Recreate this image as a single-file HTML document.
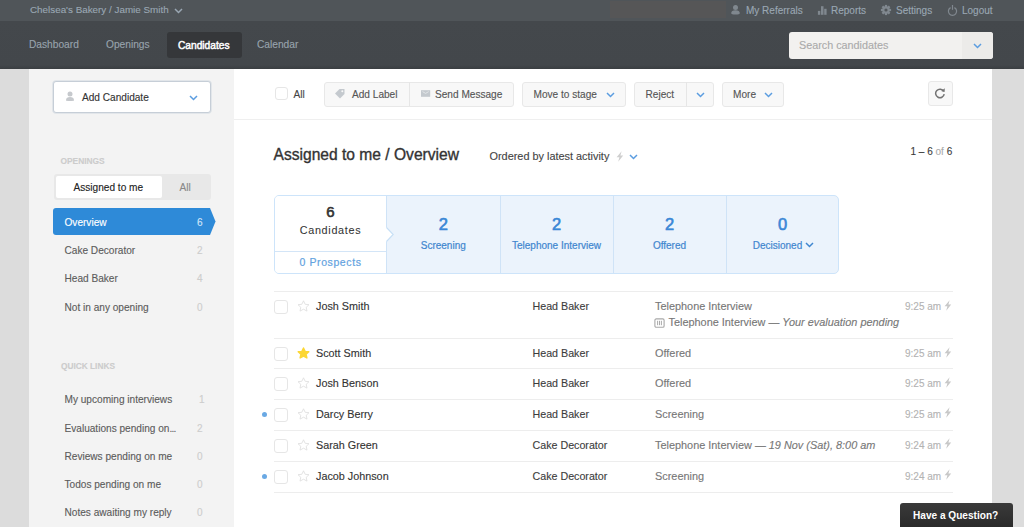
<!DOCTYPE html>
<html><head><meta charset="utf-8">
<style>
*{margin:0;padding:0;box-sizing:border-box}
html,body{width:1024px;height:527px;overflow:hidden;background:#dcdcdc;font-family:"Liberation Sans",sans-serif;}
.a{position:absolute;white-space:nowrap;-webkit-text-stroke-width:0.12px}
#top{position:absolute;left:0;top:0;width:1024px;height:21px;background:#505559}
#nav{position:absolute;left:0;top:21px;width:1024px;height:48px;background:linear-gradient(#44484c 0,#43474b 44px,#3a3e41 48px)}
#side{position:absolute;left:29px;top:69px;width:205px;height:458px;background:#f3f3f3}
#main{position:absolute;left:234px;top:69px;width:758px;height:458px;background:#fff}
.tl{color:#9aa7b3;font-size:10px;line-height:12px}
.nv{color:#98a3ad;font-size:10.2px;line-height:12px}
.btn{position:absolute;background:#f8f8f8;border:1px solid #e8e8e8;border-radius:3px;height:25px}
.bt{color:#555;font-size:10.1px;line-height:12px}
.chev{position:absolute;width:5px;height:5px;border-right:1.6px solid #5b9de0;border-bottom:1.6px solid #5b9de0;transform:rotate(45deg)}
.cb{position:absolute;width:14px;height:14px;border:1px solid #e6e6e6;border-radius:3px;background:#fff}
.nm{color:#333;font-size:10.8px;line-height:12px}
.jb{color:#3d3d3d;font-size:10.7px;line-height:12px}
.st{color:#777;font-size:10.9px;line-height:12px}
.tm{color:#b3b3b3;font-size:10px;line-height:12px}
.hl{position:absolute;left:274px;width:679px;height:1px;background:#ededed}
.si{color:#5c5c5c;font-size:10.1px;line-height:12px}
.sc{color:#cdcdcd;font-size:10px;line-height:12px}
</style></head><body>
<div id="top"></div>
<div class="a" style="left:610px;top:1px;width:116px;height:17px;background:#565657"></div>
<div class="a tl" style="left:30px;top:3.5px;font-size:9.86px">Chelsea's Bakery / Jamie Smith</div>
<svg class="a" style="left:173.5px;top:7.5px" width="10" height="6" viewBox="0 0 10 6"><path d="M1 1 L4.5 4.5 L8 1" fill="none" stroke="#9aa7b3" stroke-width="1.5"/></svg>

<svg class="a" style="left:730px;top:4px" width="12" height="12" viewBox="0 0 12 12"><circle cx="5.5" cy="3.4" r="2.5" fill="#80888f"/><path d="M1.2 9.2 Q1.2 6.2 5.5 6.2 Q9.8 6.2 9.8 9.2 Q9.8 10.6 5.5 10.6 Q1.2 10.6 1.2 9.2Z" fill="#80888f"/></svg>
<svg class="a" style="left:817px;top:5px" width="11" height="11" viewBox="0 0 11 11"><rect x="0.9" y="5.9" width="2.4" height="3.9" fill="#80888f"/><rect x="4" y="1.2" width="2.5" height="8.6" fill="#80888f"/><rect x="7.2" y="3.8" width="2.4" height="6" fill="#80888f"/></svg>
<svg class="a" style="left:880px;top:4px" width="12" height="12" viewBox="-6 -6 12 12"><g fill="#80888f"><circle r="3.7"/><rect x="-1.1" y="-5.1" width="2.2" height="10.2"/><rect x="-1.1" y="-5.1" width="2.2" height="10.2" transform="rotate(45)"/><rect x="-1.1" y="-5.1" width="2.2" height="10.2" transform="rotate(90)"/><rect x="-1.1" y="-5.1" width="2.2" height="10.2" transform="rotate(135)"/></g><circle r="1.6" fill="#505559"/></svg>
<svg class="a" style="left:947px;top:4px" width="12" height="12" viewBox="0 0 12 12"><path d="M3.6 3.6 A4.1 4.1 0 1 0 7.4 3.6" stroke="#80888f" stroke-width="1.2" fill="none"/><path d="M5.5 1 V5.8" stroke="#80888f" stroke-width="1.2"/></svg>

<div class="a tl" style="left:746px;top:4.7px">My Referrals</div>
<div class="a tl" style="left:831px;top:4.7px">Reports</div>
<div class="a tl" style="left:896px;top:4.7px">Settings</div>
<div class="a tl" style="left:962px;top:4.7px">Logout</div>

<div id="nav"></div>
<div class="a nv" style="left:29px;top:39px">Dashboard</div>
<div class="a nv" style="left:106px;top:39px">Openings</div>
<div class="a" style="left:166.5px;top:31.5px;width:75px;height:26.5px;background:#35373a;border-radius:3px"></div>
<div class="a" style="left:178px;top:39.5px;color:#fff;font-size:10.2px;line-height:12px;-webkit-text-stroke:0.45px #fff">Candidates</div>
<div class="a nv" style="left:257px;top:39px">Calendar</div>
<div class="a" style="left:789px;top:31.5px;width:204px;height:27px;background:#f2f1ef;border-radius:3px"></div>
<div class="a" style="left:962px;top:31.5px;width:31px;height:27px;background:#ecebe9;border-radius:0 3px 3px 0"></div>
<div class="a" style="left:799px;top:38.5px;color:#aaa;font-size:10.8px;line-height:12px">Search candidates</div>
<svg class="a" style="left:972.5px;top:43.0px" width="10" height="6" viewBox="0 0 10 6"><path d="M1 1 L4.5 4.5 L8 1" fill="none" stroke="#5b9de0" stroke-width="1.5"/></svg>

<div id="side"></div>
<!-- Add candidate -->
<div class="a" style="left:53px;top:81px;width:157.5px;height:31.5px;background:#fff;border:1px solid #c6ced7;box-shadow:0 0 0 0.8px #dde2e7;border-radius:3px"></div>
<svg class="a" style="left:65px;top:91px" width="10" height="11" viewBox="0 0 10 11"><circle cx="5" cy="3" r="2.5" fill="#c6c9cd"/><path d="M1 9.6 C1 6.8 2.6 6 5 6 C7.4 6 9 6.8 9 9.6 Q9 10 5 10 Q1 10 1 9.6Z" fill="#c6c9cd"/></svg>
<div class="a si" style="left:82px;top:91.7px;color:#333">Add Candidate</div>
<svg class="a" style="left:188.5px;top:94.5px" width="10" height="6" viewBox="0 0 10 6"><path d="M1 1 L4.5 4.5 L8 1" fill="none" stroke="#5b9de0" stroke-width="1.5"/></svg>

<div class="a" style="left:60.5px;top:157px;color:#ccc;font-weight:bold;font-size:8.4px;line-height:9px">OPENINGS</div>
<div class="a" style="left:53.5px;top:173.5px;width:157.5px;height:26.5px;background:#e8e8e8;border-radius:3px"></div>
<div class="a" style="left:55.5px;top:176px;width:106.5px;height:22px;background:#fff;border-radius:2px"></div>
<div class="a si" style="left:73.5px;top:182px;color:#222">Assigned to me</div>
<div class="a si" style="left:179.5px;top:182px;color:#888">All</div>

<svg class="a" style="left:52.5px;top:208px" width="163" height="27" viewBox="0 0 163 27"><path d="M0 3 Q0 0 3 0 L157 0 L162.5 13.5 L157 27 L3 27 Q0 27 0 24Z" fill="#2e8ad8"/></svg>
<div class="a si" style="left:64.5px;top:216.5px;color:#fff">Overview</div>
<div class="a si" style="left:197px;top:216.5px;color:#d3e6f8">6</div>

<div class="a si" style="left:64.5px;top:245px">Cake Decorator</div><div class="a sc" style="left:197px;top:245px">2</div>
<div class="a si" style="left:64.5px;top:273px">Head Baker</div><div class="a sc" style="left:197px;top:273px">4</div>
<div class="a si" style="left:64.5px;top:302px">Not in any opening</div><div class="a sc" style="left:197px;top:302px">0</div>

<div class="a" style="left:61px;top:362px;color:#ccc;font-weight:bold;font-size:8.3px;line-height:9px">QUICK LINKS</div>
<div class="a si" style="left:64.5px;top:394px">My upcoming interviews</div><div class="a sc" style="left:199px;top:394px">1</div>
<div class="a si" style="left:64.5px;top:422.5px">Evaluations pending on<span style="letter-spacing:-0.8px">...</span></div><div class="a sc" style="left:197px;top:422.5px">2</div>
<div class="a si" style="left:64.5px;top:451px">Reviews pending on me</div><div class="a sc" style="left:197px;top:451px">0</div>
<div class="a si" style="left:64.5px;top:478.8px">Todos pending on me</div><div class="a sc" style="left:197px;top:478.8px">0</div>
<div class="a si" style="left:64.5px;top:507.2px">Notes awaiting my reply</div><div class="a sc" style="left:197px;top:507.2px">0</div>
<div id="main"></div>
<!-- toolbar -->
<div class="a" style="left:234px;top:119px;width:758px;height:1px;background:#efefef"></div>
<div class="cb" style="left:274.5px;top:86.5px;width:13.5px;height:13px"></div>
<div class="a bt" style="left:293.5px;top:88.5px;color:#444">All</div>
<div class="btn" style="left:323.5px;top:81.5px;width:190px"></div>
<div class="a" style="left:409px;top:82px;width:1px;height:24px;background:#e6e6e6"></div>
<svg class="a" style="left:334px;top:88px" width="12" height="11" viewBox="0 0 12 11"><path d="M1 5.5 L5.5 1 L10.5 1 L10.5 6 L6 10.5Z" fill="#c4c9ce"/><circle cx="8.3" cy="3.2" r="1" fill="#f8f8f8"/></svg>
<div class="a bt" style="left:352px;top:88.5px">Add Label</div>
<svg class="a" style="left:421px;top:90px" width="10" height="8" viewBox="0 0 10 8"><rect x="0" y="0.2" width="9.2" height="6.6" fill="#c4c9ce"/><path d="M1.5 1.6 L4.6 3.4 L7.7 1.6" stroke="#eef0f2" stroke-width="0.7" fill="none"/></svg>
<div class="a bt" style="left:435px;top:88.5px">Send Message</div>

<div class="btn" style="left:522px;top:81.5px;width:104px"></div>
<div class="a bt" style="left:533.5px;top:88.5px">Move to stage</div>
<svg class="a" style="left:606.0px;top:92.0px" width="10" height="6" viewBox="0 0 10 6"><path d="M1 1 L4.5 4.5 L8 1" fill="none" stroke="#5b9de0" stroke-width="1.5"/></svg>

<div class="btn" style="left:634px;top:81.5px;width:80px"></div>
<div class="a" style="left:685.5px;top:82px;width:1px;height:24px;background:#e6e6e6"></div>
<div class="a bt" style="left:645.5px;top:88.5px">Reject</div>
<svg class="a" style="left:695.5px;top:92.0px" width="10" height="6" viewBox="0 0 10 6"><path d="M1 1 L4.5 4.5 L8 1" fill="none" stroke="#5b9de0" stroke-width="1.5"/></svg>

<div class="btn" style="left:721.5px;top:81.5px;width:62.5px"></div>
<div class="a bt" style="left:733px;top:88.5px">More</div>
<svg class="a" style="left:764.0px;top:92.0px" width="10" height="6" viewBox="0 0 10 6"><path d="M1 1 L4.5 4.5 L8 1" fill="none" stroke="#5b9de0" stroke-width="1.5"/></svg>

<div class="btn" style="left:928px;top:80.5px;width:25px;height:25px"></div>
<svg class="a" style="left:934px;top:86.5px" width="12" height="12" viewBox="0 0 12 12"><path d="M9.7 4.3 A4.3 4.3 0 1 0 10.2 7.2" stroke="#737373" stroke-width="1.5" fill="none"/><path d="M7.2 3.9 L10.6 4.9 L10.8 1.3Z" fill="#737373"/></svg>

<!-- title -->
<div class="a" style="left:273.5px;top:145.9px;color:#333;font-size:15.6px;line-height:17px;-webkit-text-stroke:0.35px #333">Assigned to me / Overview</div>
<div class="a" style="left:489.5px;top:150px;color:#444;font-size:10.9px;line-height:12px">Ordered by latest activity</div>
<svg class="a" style="left:615.5px;top:150.5px" width="8" height="11" viewBox="0 0 8 11"><path d="M5.6 0.3 L0.6 6.2 L3.4 6.2 L2.2 10.7 L7.2 4.6 L4.4 4.6Z" fill="#cfcfcf"/></svg>
<svg class="a" style="left:628.5px;top:154.0px" width="10" height="6" viewBox="0 0 10 6"><path d="M1 1 L4.5 4.5 L8 1" fill="none" stroke="#5b9de0" stroke-width="1.5"/></svg>
<div class="a" style="left:910.5px;top:146px;color:#3a3a3a;font-size:10px;line-height:12px;-webkit-text-stroke-width:0.1px">1 – 6 <span style="color:#aaa">of</span> 6</div>

<!-- stats -->
<div class="a" style="left:274px;top:195px;width:565px;height:78.5px;background:#ebf3fc;border:1px solid #cde4fa;border-radius:5px"></div>
<div class="a" style="left:275px;top:196px;width:111.5px;height:76.5px;background:#fff;border-radius:4px 0 0 4px"></div>
<div class="a" style="left:386px;top:196px;width:1px;height:76.5px;background:#cfe3f7"></div>
<svg class="a" style="left:385px;top:226.5px" width="10" height="15" viewBox="0 0 10 15"><path d="M0 0 L1.5 0.5 L8.2 7.5 L1.5 14.5 L0 15Z" fill="#fff"/><path d="M1.5 0.5 L8.2 7.5 L1.5 14.5" stroke="#c6dff6" stroke-width="1.1" fill="none"/></svg>
<div class="a" style="left:275px;top:251px;width:111px;height:1px;background:#d3e5f7"></div>
<div class="a" style="left:499.5px;top:196px;width:1px;height:76.5px;background:#cfe3f7"></div>
<div class="a" style="left:612.5px;top:196px;width:1px;height:76.5px;background:#cfe3f7"></div>
<div class="a" style="left:725.5px;top:196px;width:1px;height:76.5px;background:#cfe3f7"></div>

<div class="a" style="left:275px;top:202.5px;width:111px;text-align:center;color:#333;font-size:15px;line-height:17px;-webkit-text-stroke:0.6px #333">6</div>
<div class="a" style="left:275px;top:224px;width:111px;text-align:center;color:#333;font-size:10.8px;line-height:12px;letter-spacing:0.7px;-webkit-text-stroke:0.05px #333">Candidates</div>
<div class="a" style="left:275px;top:256px;width:111px;text-align:center;color:#62a2e0;font-size:10.5px;line-height:12px;letter-spacing:0.6px;-webkit-text-stroke:0.2px #62a2e0">0 Prospects</div>

<div class="a" style="left:387px;top:215px;width:112.5px;text-align:center;color:#3a87d6;font-size:16.5px;line-height:19px;-webkit-text-stroke:0.6px #3a87d6">2</div>
<div class="a" style="left:387px;top:239.7px;width:112.5px;text-align:center;color:#3f86cf;font-size:10px;line-height:12px;-webkit-text-stroke:0.2px #3f86cf">Screening</div>
<div class="a" style="left:500.5px;top:215px;width:112px;text-align:center;color:#3a87d6;font-size:16.5px;line-height:19px;-webkit-text-stroke:0.6px #3a87d6">2</div>
<div class="a" style="left:500.5px;top:239.7px;width:112px;text-align:center;color:#3f86cf;font-size:10px;line-height:12px;-webkit-text-stroke:0.2px #3f86cf">Telephone Interview</div>
<div class="a" style="left:613.5px;top:215px;width:112px;text-align:center;color:#3a87d6;font-size:16.5px;line-height:19px;-webkit-text-stroke:0.6px #3a87d6">2</div>
<div class="a" style="left:613.5px;top:239.7px;width:112px;text-align:center;color:#3f86cf;font-size:10px;line-height:12px;-webkit-text-stroke:0.2px #3f86cf">Offered</div>
<div class="a" style="left:726.5px;top:215px;width:112px;text-align:center;color:#3a87d6;font-size:16.5px;line-height:19px;-webkit-text-stroke:0.6px #3a87d6">0</div>
<div class="a" style="left:726.5px;top:239.7px;width:112px;text-align:center;color:#3f86cf;font-size:10px;line-height:12px;-webkit-text-stroke:0.2px #3f86cf;padding-right:10px">Decisioned</div>
<svg class="a" style="left:804.5px;top:242.0px" width="10" height="6" viewBox="0 0 10 6"><path d="M1 1 L4.5 4.5 L8 1" fill="none" stroke="#3f86cf" stroke-width="1.5"/></svg>

<!-- table -->
<div class="hl" style="top:291px"></div>
<div class="hl" style="top:338px"></div>
<div class="hl" style="top:368px"></div>
<div class="hl" style="top:399px"></div>
<div class="hl" style="top:430px"></div>
<div class="hl" style="top:461px"></div>
<div class="hl" style="top:492px"></div>
<div class="cb" style="left:274px;top:300px"></div>
<svg class="a" style="left:297px;top:300.2px" width="13" height="12" viewBox="0 0 13 12"><path d="M6.5 0.8 L8.2 4.3 L12 4.7 L9.2 7.3 L10 11.1 L6.5 9.2 L3 11.1 L3.8 7.3 L1 4.7 L4.8 4.3Z" fill="none" stroke="#e0e0e0" stroke-width="0.9" stroke-linejoin="round"/></svg>
<div class="a nm" style="left:316px;top:300.3px">Josh Smith</div>
<div class="a jb" style="left:532.5px;top:300.3px">Head Baker</div>
<div class="a st" style="left:655px;top:300.3px">Telephone Interview</div>
<div class="a tm" style="left:905px;top:301.3px">9:25 am</div>
<svg class="a" style="left:944px;top:300.0px" width="8" height="11" viewBox="0 0 8 11"><path d="M5.6 0.3 L0.6 6.2 L3.4 6.2 L2.2 10.7 L7.2 4.6 L4.4 4.6Z" fill="#c8c8c8"/></svg>
<div class="cb" style="left:274px;top:346.5px"></div>
<svg class="a" style="left:297px;top:346.7px" width="13" height="12" viewBox="0 0 13 12"><path d="M6.5 1 L8.1 4.4 L11.8 4.8 L9.1 7.3 L9.9 11 L6.5 9.1 L3.1 11 L3.9 7.3 L1.2 4.8 L4.9 4.4Z" fill="#fcd734" stroke="#fcd734" stroke-width="1.4" stroke-linejoin="round"/></svg>
<div class="a nm" style="left:316px;top:347.3px">Scott Smith</div>
<div class="a jb" style="left:532.5px;top:347.3px">Head Baker</div>
<div class="a st" style="left:655px;top:347.3px">Offered</div>
<div class="a tm" style="left:905px;top:348.3px">9:25 am</div>
<svg class="a" style="left:944px;top:346.5px" width="8" height="11" viewBox="0 0 8 11"><path d="M5.6 0.3 L0.6 6.2 L3.4 6.2 L2.2 10.7 L7.2 4.6 L4.4 4.6Z" fill="#c8c8c8"/></svg>
<div class="cb" style="left:274px;top:377px"></div>
<svg class="a" style="left:297px;top:377.2px" width="13" height="12" viewBox="0 0 13 12"><path d="M6.5 0.8 L8.2 4.3 L12 4.7 L9.2 7.3 L10 11.1 L6.5 9.2 L3 11.1 L3.8 7.3 L1 4.7 L4.8 4.3Z" fill="none" stroke="#e0e0e0" stroke-width="0.9" stroke-linejoin="round"/></svg>
<div class="a nm" style="left:316px;top:377.3px">Josh Benson</div>
<div class="a jb" style="left:532.5px;top:377.3px">Head Baker</div>
<div class="a st" style="left:655px;top:377.3px">Offered</div>
<div class="a tm" style="left:905px;top:378.3px">9:25 am</div>
<svg class="a" style="left:944px;top:376.5px" width="8" height="11" viewBox="0 0 8 11"><path d="M5.6 0.3 L0.6 6.2 L3.4 6.2 L2.2 10.7 L7.2 4.6 L4.4 4.6Z" fill="#c8c8c8"/></svg>
<div class="cb" style="left:274px;top:408px"></div>
<svg class="a" style="left:297px;top:408.2px" width="13" height="12" viewBox="0 0 13 12"><path d="M6.5 0.8 L8.2 4.3 L12 4.7 L9.2 7.3 L10 11.1 L6.5 9.2 L3 11.1 L3.8 7.3 L1 4.7 L4.8 4.3Z" fill="none" stroke="#e0e0e0" stroke-width="0.9" stroke-linejoin="round"/></svg>
<div class="a nm" style="left:316px;top:408.0px">Darcy Berry</div>
<div class="a jb" style="left:532.5px;top:408.0px">Head Baker</div>
<div class="a st" style="left:655px;top:408.0px">Screening</div>
<div class="a tm" style="left:905px;top:409.0px">9:25 am</div>
<svg class="a" style="left:944px;top:407.2px" width="8" height="11" viewBox="0 0 8 11"><path d="M5.6 0.3 L0.6 6.2 L3.4 6.2 L2.2 10.7 L7.2 4.6 L4.4 4.6Z" fill="#c8c8c8"/></svg>
<div class="a" style="left:262.2px;top:412.3px;width:5px;height:5px;border-radius:50%;background:#6aa9e4"></div>
<div class="cb" style="left:274px;top:439px"></div>
<svg class="a" style="left:297px;top:439.2px" width="13" height="12" viewBox="0 0 13 12"><path d="M6.5 0.8 L8.2 4.3 L12 4.7 L9.2 7.3 L10 11.1 L6.5 9.2 L3 11.1 L3.8 7.3 L1 4.7 L4.8 4.3Z" fill="none" stroke="#e0e0e0" stroke-width="0.9" stroke-linejoin="round"/></svg>
<div class="a nm" style="left:316px;top:438.7px">Sarah Green</div>
<div class="a jb" style="left:532.5px;top:438.7px">Cake Decorator</div>
<div class="a st" style="left:655px;top:438.7px">Telephone Interview — <i>19 Nov (Sat), 8:00 am</i></div>
<div class="a tm" style="left:905px;top:439.7px">9:24 am</div>
<svg class="a" style="left:944px;top:437.9px" width="8" height="11" viewBox="0 0 8 11"><path d="M5.6 0.3 L0.6 6.2 L3.4 6.2 L2.2 10.7 L7.2 4.6 L4.4 4.6Z" fill="#c8c8c8"/></svg>
<div class="cb" style="left:274px;top:470px"></div>
<svg class="a" style="left:297px;top:470.2px" width="13" height="12" viewBox="0 0 13 12"><path d="M6.5 0.8 L8.2 4.3 L12 4.7 L9.2 7.3 L10 11.1 L6.5 9.2 L3 11.1 L3.8 7.3 L1 4.7 L4.8 4.3Z" fill="none" stroke="#e0e0e0" stroke-width="0.9" stroke-linejoin="round"/></svg>
<div class="a nm" style="left:316px;top:469.5px">Jacob Johnson</div>
<div class="a jb" style="left:532.5px;top:469.5px">Cake Decorator</div>
<div class="a st" style="left:655px;top:469.5px">Screening</div>
<div class="a tm" style="left:905px;top:470.5px">9:24 am</div>
<svg class="a" style="left:944px;top:468.7px" width="8" height="11" viewBox="0 0 8 11"><path d="M5.6 0.3 L0.6 6.2 L3.4 6.2 L2.2 10.7 L7.2 4.6 L4.4 4.6Z" fill="#c8c8c8"/></svg>
<div class="a" style="left:262.2px;top:474.3px;width:5px;height:5px;border-radius:50%;background:#6aa9e4"></div>
<svg class="a" style="left:654px;top:317.5px" width="11" height="10" viewBox="0 0 11 10"><rect x="0.9" y="0.9" width="9.2" height="8.4" rx="1.3" fill="none" stroke="#a8a8a8" stroke-width="1.1"/><path d="M3.6 2.8 V7.2 M5.5 2.8 V7.2 M7.4 2.8 V7.2" stroke="#a0a0a0" stroke-width="0.9"/></svg>
<div class="a st" style="left:668.5px;top:316.0px">Telephone Interview — <i>Your evaluation pending</i></div>
<div class="a" style="left:899.5px;top:502.5px;width:113.5px;height:30px;background:linear-gradient(#3a3a3a,#262626);border-radius:3px 3px 0 0"></div>
<div class="a" style="left:913px;top:510px;color:#fff;font-weight:bold;font-size:10.1px;line-height:12px;-webkit-text-stroke-width:0">Have a Question?</div>
</body></html>
